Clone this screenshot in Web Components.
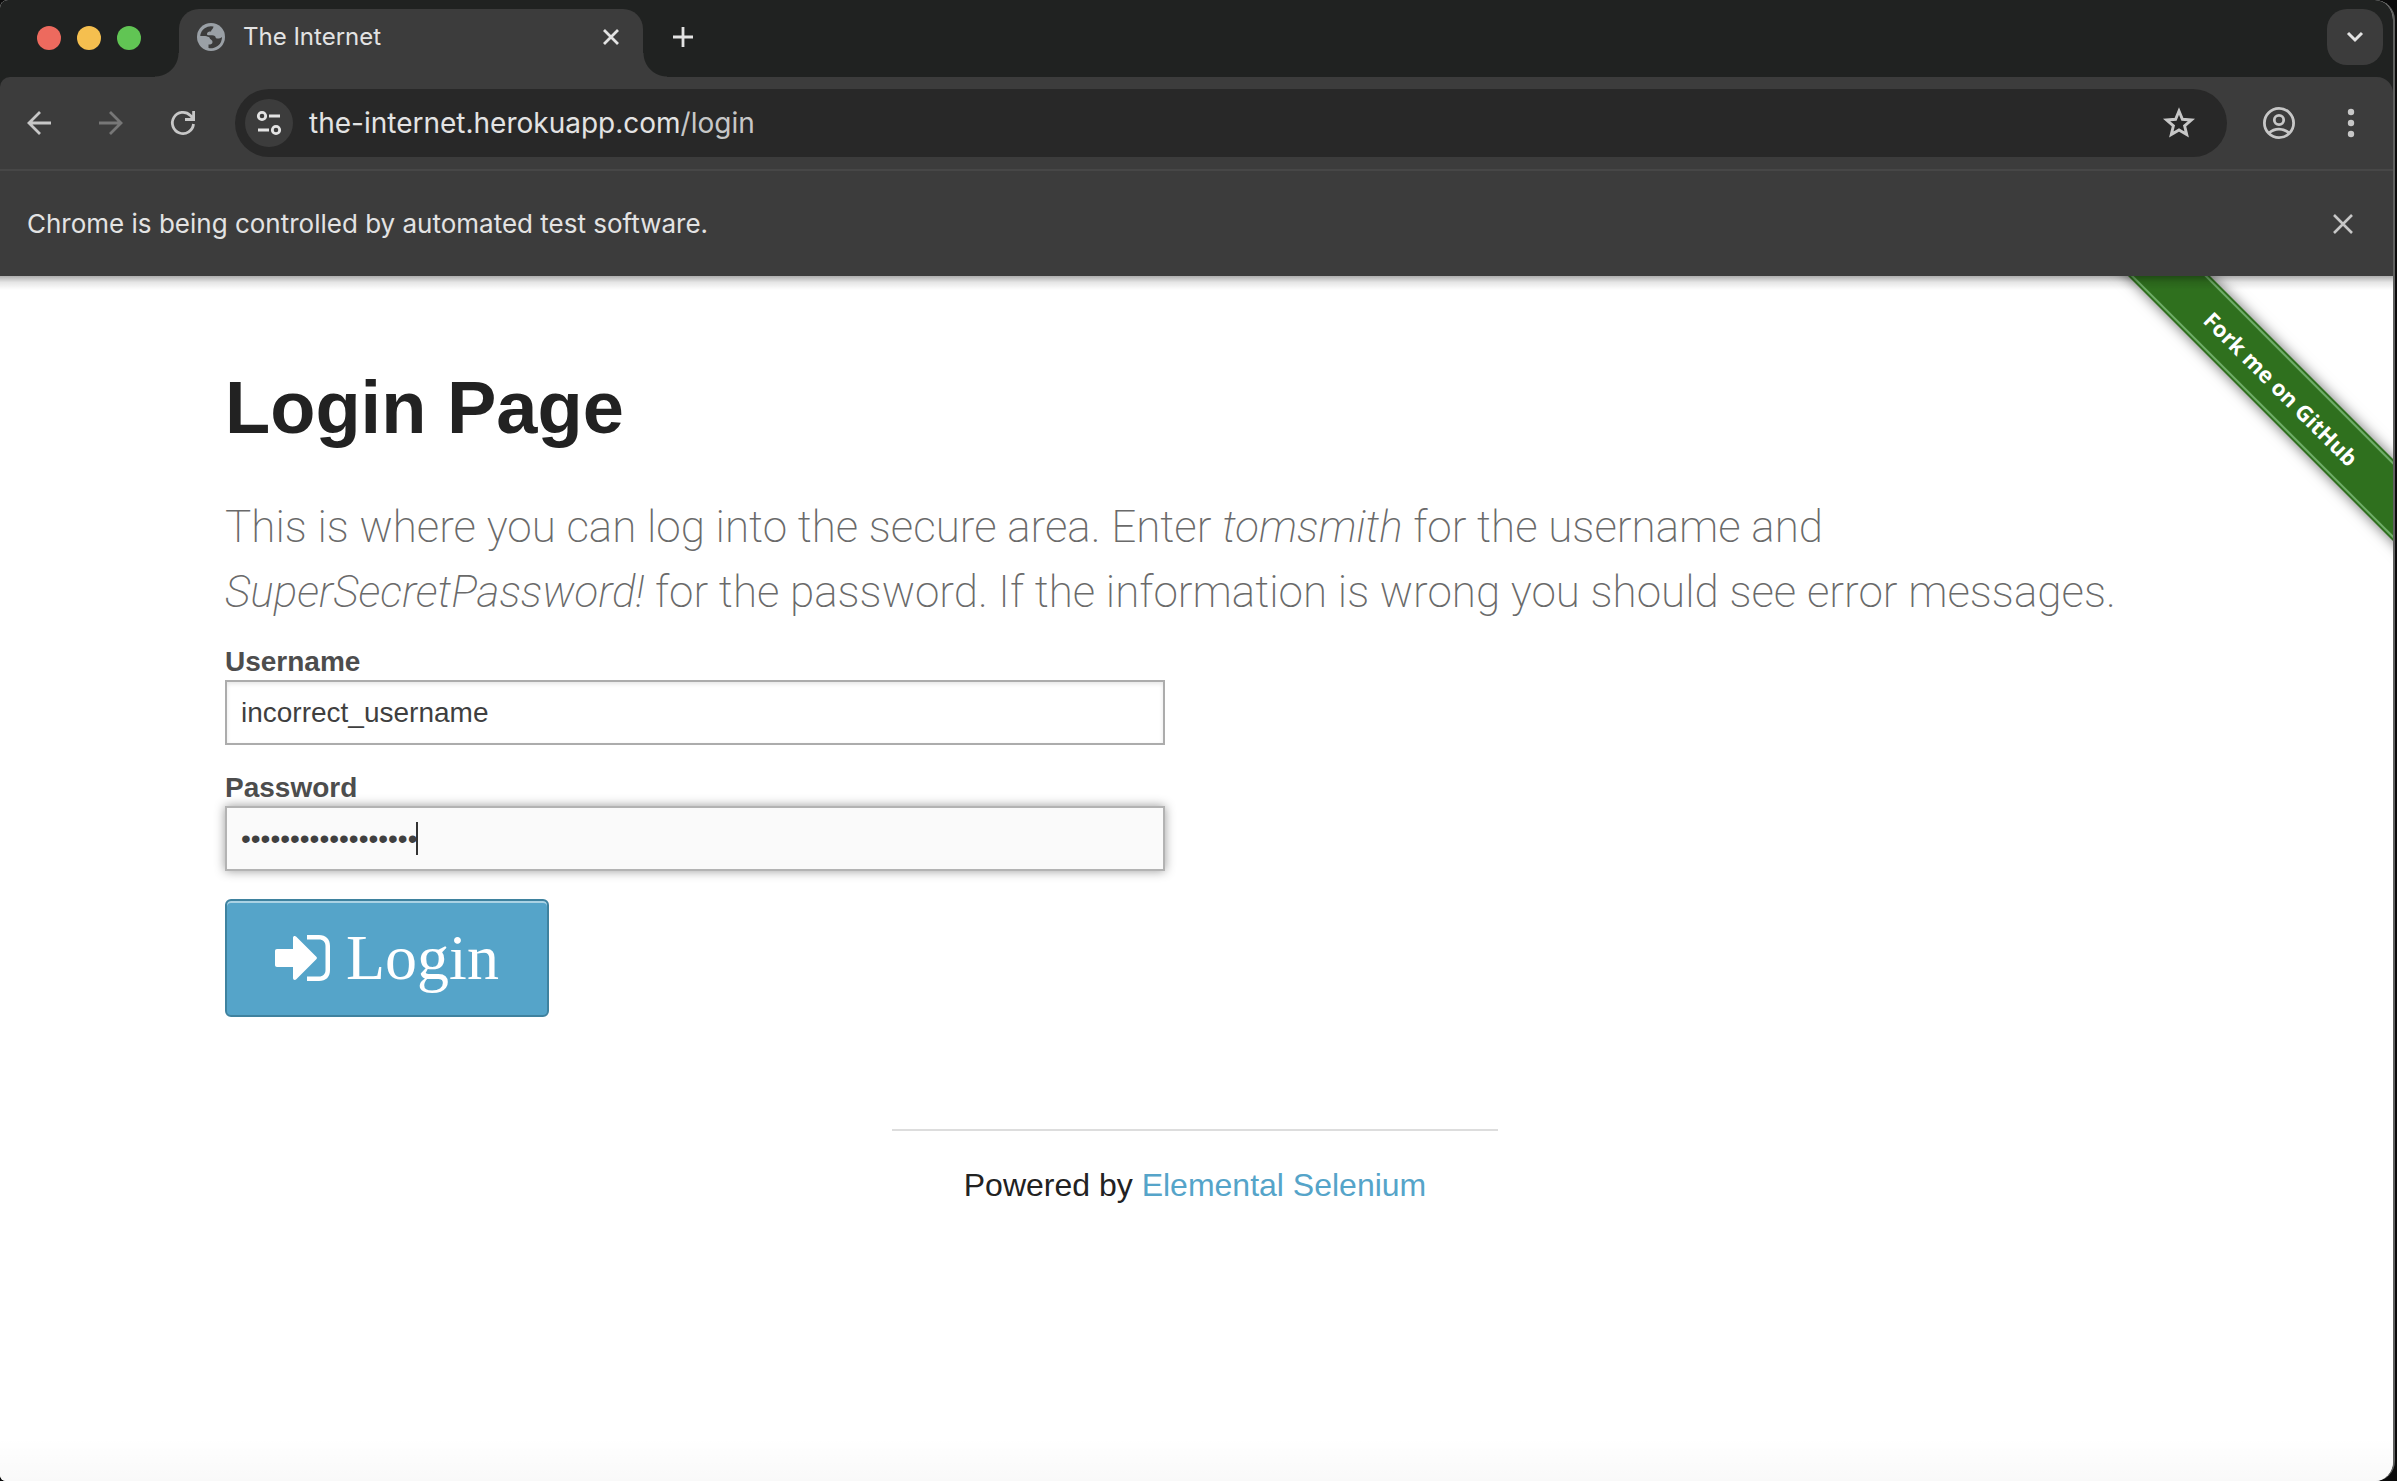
<!DOCTYPE html>
<html lang="en">
<head>
<meta charset="utf-8">
<title>The Internet</title>
<style>
html,body{margin:0;height:100%}
body{background:#0b0b0b;font-family:Inter,"Liberation Sans",sans-serif;overflow:hidden}
</style>
</head>
<body>
<browser-window>
  <tab-strip slot="tabs">The Internet</tab-strip>
  <tool-bar slot="toolbar" host="the-internet.herokuapp.com" path="/login"></tool-bar>
  <info-bar slot="info">Chrome is being controlled by automated test software.</info-bar>
  <login-page></login-page>
</browser-window>
<script>
const reset = `*,:host{box-sizing:border-box}button{font:inherit;color:inherit;background:none;border:0;padding:0;margin:0;display:grid;place-items:center}svg{display:block;fill:none;stroke:currentColor;overflow:visible}`;
function define(name, render) {
  customElements.define(name, class extends HTMLElement {
    connectedCallback() {
      if (this.shadowRoot) return;
      const t = document.createElement('template');
      t.innerHTML = render(this);
      this.attachShadow({mode: 'open'}).append(t.content.cloneNode(true));
    }
  });
}

define('browser-window', () => `<style>${reset}
:host{display:flex;flex-direction:column;min-height:100vh;margin-right:2px;border-right:2px solid #5f605f;border-radius:8px 20px 20px 6px;background:#fff;overflow:hidden}
.page{flex:1;display:flex;margin-right:-2px;background:#fff;position:relative;overflow:hidden}
.page::before{content:"";position:absolute;inset:0 0 auto;height:14px;background:linear-gradient(rgba(0,0,0,.32),rgba(0,0,0,.1) 45%,transparent);z-index:2}
.page::after{content:"";position:absolute;inset:auto 0 0;height:44px;background:linear-gradient(transparent,rgba(0,0,0,.025))}
</style>
<slot name="tabs"></slot><slot name="toolbar"></slot><slot name="info"></slot><div class="page"><slot></slot></div>`);

define('tab-strip', () => `<style>${reset}
:host{display:flex;height:77px;padding:9px 10px 0 37px;background:#202221;color:#e3e3e3}
.lights{display:flex;gap:16px;padding-top:17px;width:142px}
.lights i{width:24px;height:24px;border-radius:50%}
.tab{position:relative;display:flex;align-items:center;width:464px;height:68px;padding:0 21px 12px 18px;background:#3c3c3c;border-radius:20px 20px 0 0;font-size:24px;line-height:32px}
.tab::before,.tab::after{content:"";position:absolute;bottom:0;width:24px;height:24px}
.tab::before{right:100%;background:radial-gradient(circle at 0 0,transparent 23px,#3c3c3c 24px)}
.tab::after{left:100%;background:radial-gradient(circle at 100% 0,transparent 23px,#3c3c3c 24px)}
.title{flex:1;padding-left:18px}
.new{width:40px;height:56px;margin-left:20px}
.search{width:56px;height:56px;border-radius:20px;background:#3c3c3c;margin-left:auto}
</style>
<div class="lights"><i style="background:#ed6a5e"></i><i style="background:#f5bf4f"></i><i style="background:#61c554"></i></div>
<div class="tab">
<svg width="28" height="28" viewBox="0 0 28 28"><circle cx="14" cy="14" r="14" fill="#9aa0a6" stroke="none"/><path fill="#3c3c3c" stroke="none" d="M3.200 13A11 11 0 0 1 16.500 3.500C16.500 6 14 6.500 14 8.500C12 8.500 10 9 10 11C10 12.500 11.500 12.200 14 12.200C17.500 12.200 18.500 13 18.800 15C20.500 16.200 23 15.500 25 14A11 11 0 0 1 11.500 25V21.500C14 21.500 15.500 21 15.500 19C15.500 16.500 13 17 12.500 14.500C11 13 6 13 3.200 13z"/></svg>
<span class="title"><slot></slot></span>
<button aria-label="Close tab"><svg width="22" height="22" viewBox="0 0 22 22" stroke-width="2.800"><path d="M4 4l14 14M18 4L4 18"/></svg></button></div>
<button class="new" aria-label="New tab"><svg width="20" height="20" viewBox="0 0 20 20" stroke-width="2.800"><path d="M10 0v20M0 10h20"/></svg></button>
<button class="search" aria-label="Search tabs"><svg width="16" height="10" viewBox="0 0 16 10" stroke-width="3"><path d="M1 1l7 7 7-7"/></svg></button>`);

define('tool-bar', el => `<style>${reset}
:host{display:block;background:#202221;color:#c7c7c7}
.bar{display:flex;align-items:center;height:94px;padding:0 24px 0 19px;background:#3c3c3c;border-bottom:2px solid #474747;border-radius:10px 16px 0 0}
.nav{width:40px;height:40px;margin-right:32px}
.nav:disabled{color:#777}
.omni{flex:1;display:flex;align-items:center;height:68px;padding:0 32px 0 10px;border-radius:34px;background:#282828}
.site{width:48px;height:48px;border-radius:50%;background:#3c3c3c;color:#e3e3e3}
.url{flex:1;padding-left:16px;font-size:28px;line-height:36px;color:#e3e3e3}
.url span{color:#c7c7c7}
.user{margin:0 38px 0 36px}
</style><div class="bar">
<button class="nav" aria-label="Back"><svg width="24" height="24" viewBox="0 0 24 24" stroke-width="2.800"><path d="M24 12H2M13 1L2 12l11 11"/></svg></button>
<button class="nav" aria-label="Forward" disabled><svg width="24" height="24" viewBox="0 0 24 24" stroke-width="2.800"><path d="M0 12h22M11 1l11 11-11 11"/></svg></button>
<button class="nav" aria-label="Reload"><svg width="24" height="24" viewBox="0 0 24 24" stroke-width="2.800"><path d="M22.500 13A10.600 10.600 0 1 1 19.400 4.400L22 7.500M22.600 0v8.500H14"/></svg></button>
<div class="omni"><button class="site" aria-label="Site information"><svg width="26" height="26" viewBox="0 0 26 26" stroke-width="2.800"><circle cx="6" cy="6" r="3.700"/><path d="M13 6h11M2 20h11"/><circle cx="20" cy="20" r="3.700"/></svg></button>
<div class="url">${el.getAttribute('host')}<span>${el.getAttribute('path')}</span></div>
<button aria-label="Bookmark this page"><svg width="32" height="32" viewBox="0 0 32 32" stroke-width="2.900"><path d="M16 4l3.400 8.300 9 .7-6.800 5.800 2.100 8.700L16 22.900l-7.700 4.600 2.100-8.700L3.600 13l9-.7z"/></svg></button></div>
<button class="user" aria-label="Profile"><svg width="32" height="32" viewBox="0 0 32 32" stroke-width="2.800"><circle cx="16" cy="16" r="14.600"/><circle cx="16" cy="13" r="4.700"/><path d="M6 26c5.500-5.300 14.500-5.300 20 0"/></svg></button>
<button aria-label="Menu"><svg width="36" height="28" viewBox="0 0 36 28"><g fill="#c7c7c7" stroke="none"><circle cx="18" cy="3" r="3.200"/><circle cx="18" cy="14" r="3.200"/><circle cx="18" cy="25" r="3.200"/></g></svg></button></div>`);

define('info-bar', () => `<style>${reset}
:host{display:flex;align-items:center;justify-content:space-between;height:105px;padding:0 36px 0 27px;background:#3c3c3c;color:#e3e3e3;font-size:26px;line-height:36px}
button{color:#c7c7c7}
</style><span><slot></slot></span><button aria-label="Dismiss"><svg width="28" height="28" viewBox="0 0 28 28" stroke-width="2.600"><path d="M5 5l18 18M23 5L5 23"/></svg></button>`);

define('fork-ribbon', () => `<style>${reset}
:host{position:absolute;top:0;right:0;width:300px;height:300px;overflow:hidden}
a{position:absolute;left:-35px;top:82px;width:440px;height:58px;display:flex;align-items:center;justify-content:center;padding-left:4px;transform:rotate(45deg);background:#2f701e;box-shadow:0 0 14px rgba(0,0,0,.55);color:#fff;font:700 22px/32px "Open Sans",sans-serif;text-decoration:none}
a::before{content:"";position:absolute;inset:2px 0;border:solid #6fad68;border-width:2px 0}
</style><a href="https://github.com/tourdedave/the-internet">Fork me on GitHub</a>`);

define('form-field', el => `<style>${reset}
:host{display:block;margin-bottom:28px}
label{display:block;margin-bottom:4px;font:700 28px/29px "Liberation Sans",sans-serif;color:#4d4d4d}
.box{position:relative}
input{display:block;width:100%;height:65px;padding:0 14px;border:2px solid #acacac;border-radius:0;outline:0;background:#fff;font:28px/36px "Liberation Sans",sans-serif;color:#3f3f3f;box-shadow:inset 0 2px 4px rgba(0,0,0,.1)}
:host([active]) input{background:#fafafa;border-color:#b3b3b3;box-shadow:0 0 10px #999}
.caret{display:none;position:absolute;left:191px;top:16px;width:2px;height:33px;background:#333}
:host([active]) .caret{display:block}
</style><label for="f">${el.getAttribute('label')}</label><div class="box"><input id="f" type="${el.getAttribute('type')}" value="${el.getAttribute('value')}"><i class="caret"></i></div>`);

define('login-button', () => `<style>${reset}
:host{display:block}
button{display:flex;align-items:center;gap:15px;height:118px;padding:0 48px;border:2px solid #3f829f;border-radius:6px;background:#55a4c9;box-shadow:inset 0 2px 0 rgba(255,255,255,.5);color:#fff;font:64px/72px "Liberation Serif",serif}
</style><button type="submit"><svg width="56" height="46" viewBox="0 0 56 46"><path fill="#fff" stroke="none" d="M2 14h16V3c0-2 2-2.500 3.300-1.200l20 20c.8.800.8 1.700 0 2.500l-20 20C20 45.600 18 45 18 43V32H2c-1.200 0-2-.8-2-2V16c0-1.200.8-2 2-2z"/><path fill="#fff" stroke="none" d="M32 0h12c7 0 11 4 11 11v24c0 7-4 11-11 11H32v-4.500h12c4 0 6.500-2.500 6.500-6.500V11c0-4-2.500-6.500-6.500-6.500H32z"/></svg><span><slot></slot></span></button>`);

define('page-footer', () => `<style>${reset}
:host{display:block;width:606px;margin:112px auto 0;border-top:2px solid #ddd;padding-top:29px;text-align:center;font:32px/51px "Liberation Sans",sans-serif;color:#222}
a{color:#55a4c9;text-decoration:none}
</style>Powered by <a href="http://elementalselenium.com/">Elemental Selenium</a>`);

define('login-page', () => `<style>${reset}
:host{display:block;flex:1;padding:81px 5px 0 0}
main{max-width:2000px;margin:0 auto;padding:0 30px}
h1{margin:0;font:700 74px/102px "Liberation Sans",sans-serif;color:#222}
h2{margin:36px 0 22px;font:200 44px/65px Roboto,"Liberation Sans",sans-serif;color:#6a6a6a}
form{max-width:940px}
</style><main><h1>Login Page</h1>
<h2>This is where you can log into the secure area. Enter <em>tomsmith</em> for the username and <em>SuperSecretPassword!</em> for the password. If the information is wrong you should see error messages.</h2>
<form><form-field label="Username" type="text" value="incorrect_username"></form-field>
<form-field label="Password" type="password" value="incorrect_password" active></form-field>
<login-button>Login</login-button></form>
<page-footer></page-footer></main><fork-ribbon></fork-ribbon>`);
</script>
</body>
</html>
